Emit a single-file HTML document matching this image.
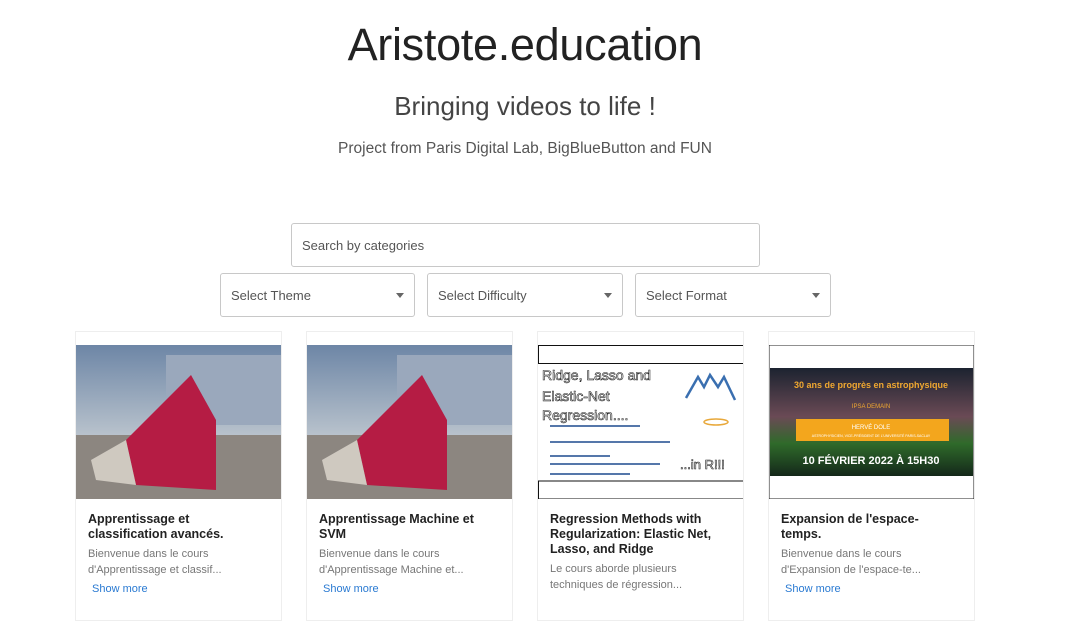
<!DOCTYPE html>
<html><head><meta charset="utf-8"><style>
body{margin:0;background:#fff;font-family:"Liberation Sans",sans-serif;width:1080px;height:608px;overflow:hidden;position:relative}
h1{position:absolute;left:0;width:1050px;text-align:center;top:19px;margin:0;font-weight:normal;font-size:45px;color:#222;letter-spacing:-0.3px}
.sub{position:absolute;left:0;width:1050px;text-align:center;top:91px;font-size:26px;color:#444}
.sub2{position:absolute;left:0;width:1050px;text-align:center;top:140px;font-size:15.5px;color:#555}
.box{position:absolute;border:1px solid #c8c8c8;border-radius:3px;box-sizing:border-box;font-size:13px;color:#555;padding-left:10px;display:flex;align-items:center}
.box .ar{position:absolute;right:10px;top:19px;width:0;height:0;border-left:4px solid transparent;border-right:4px solid transparent;border-top:5px solid #666}
.card{position:absolute;top:331px;width:207px;height:290px;border:1px solid #eee;box-sizing:border-box;background:#fff}
.img{position:absolute;left:0;top:13px;width:205px;height:154px}
.t{position:absolute;left:12px;top:180px;width:170px;font-weight:bold;font-size:12.5px;line-height:15px;color:#222}
.d{position:absolute;left:12px;width:155px;font-size:11px;line-height:16px;color:#777}
.s{position:absolute;left:16px;font-size:11px;color:#2a7ad2}
</style></head><body>
<h1>Aristote.education</h1>
<div class="sub">Bringing videos to life !</div>
<div class="sub2">Project from Paris Digital Lab, BigBlueButton and FUN</div>
<div class="box" style="left:291px;top:223px;width:469px;height:44px">Search by categories</div>
<div class="box" style="left:220px;top:273px;width:195px;height:44px">Select Theme<span class="ar"></span></div>
<div class="box" style="left:427px;top:273px;width:196px;height:44px">Select Difficulty<span class="ar"></span></div>
<div class="box" style="left:635px;top:273px;width:196px;height:44px">Select Format<span class="ar"></span></div>

<div class="card" style="left:75px">
<svg class="img" viewBox="0 0 205 154"><defs><linearGradient id="sk" x1="0" y1="0" x2="0" y2="1"><stop offset="0" stop-color="#6d86a6"/><stop offset="1" stop-color="#b8c2cc"/></linearGradient></defs><rect width="205" height="90" fill="url(#sk)"/><rect x="90" y="10" width="115" height="70" fill="#9aa8bc"/><rect x="0" y="90" width="205" height="64" fill="#8c8680"/><polygon points="50,95 115,30 140,75 140,145 60,140" fill="#b51c44"/><polygon points="50,95 60,140 20,135 15,115" fill="#cfc9c0"/></svg>
<div class="t">Apprentissage et classification avancés.</div>
<div class="d" style="top:214px">Bienvenue dans le cours d'Apprentissage et classif...</div>
<div class="s" style="top:251px">Show more</div></div>

<div class="card" style="left:306px">
<svg class="img" viewBox="0 0 205 154"><rect width="205" height="90" fill="url(#sk)"/><rect x="90" y="10" width="115" height="70" fill="#9aa8bc"/><rect x="0" y="90" width="205" height="64" fill="#8c8680"/><polygon points="50,95 115,30 140,75 140,145 60,140" fill="#b51c44"/><polygon points="50,95 60,140 20,135 15,115" fill="#cfc9c0"/></svg>
<div class="t">Apprentissage Machine et SVM</div>
<div class="d" style="top:214px">Bienvenue dans le cours d'Apprentissage Machine et...</div>
<div class="s" style="top:251px">Show more</div></div>

<div class="card" style="left:537px">
<svg class="img" viewBox="0 0 205 154"><rect width="205" height="154" fill="#fff"/><rect x="0.5" y="0.5" width="205" height="18" fill="none" stroke="#111"/><rect x="0.5" y="136" width="205" height="18" fill="none" stroke="#111"/><text x="4" y="35" font-size="14" fill="#fff" stroke="#222" stroke-width=".6" font-family="Liberation Sans">Ridge, Lasso and</text><text x="4" y="56" font-size="14" fill="#fff" stroke="#222" stroke-width=".6" font-family="Liberation Sans">Elastic-Net</text><text x="4" y="75" font-size="14" fill="#fff" stroke="#222" stroke-width=".6" font-family="Liberation Sans">Regression....</text><polyline points="148,53 160,32 166,42 172,30 180,42 186,32 197,55" fill="none" stroke="#3a6fb0" stroke-width="2.5"/><ellipse cx="178" cy="77" rx="12" ry="3" fill="none" stroke="#e8a83a" stroke-width="1.5"/><g fill="#5577aa"><rect x="12" y="80" width="90" height="2"/><rect x="12" y="96" width="120" height="2"/><rect x="12" y="110" width="60" height="2"/><rect x="12" y="118" width="110" height="2"/><rect x="12" y="128" width="80" height="2"/></g><text x="142" y="124" font-size="13" fill="#fff" stroke="#222" stroke-width=".6">...in R!!!</text></svg>
<div class="t">Regression Methods with Regularization: Elastic Net, Lasso, and Ridge</div>
<div class="d" style="top:229px">Le cours aborde plusieurs techniques de régression...</div></div>

<div class="card" style="left:768px">
<svg class="img" viewBox="0 0 205 154"><rect width="205" height="154" fill="#fff" stroke="#222"/><defs><linearGradient id="g2" x1="0" y1="0" x2="0" y2="1"><stop offset="0" stop-color="#1c2330"/><stop offset=".45" stop-color="#6a4a55"/><stop offset=".7" stop-color="#2f6a2a"/><stop offset="1" stop-color="#14281a"/></linearGradient></defs><rect x="1" y="23" width="203" height="108" fill="url(#g2)"/><text x="102" y="43" text-anchor="middle" font-size="9" fill="#f0a830" font-weight="bold">30 ans de progrès en astrophysique</text><text x="102" y="63" text-anchor="middle" font-size="6" fill="#f0a830">IPSA DEMAIN</text><rect x="27" y="74" width="153" height="22" fill="#f3a61d"/><text x="102" y="84" text-anchor="middle" font-size="6" fill="#fff">HERVÉ DOLE</text><text x="102" y="92" text-anchor="middle" font-size="3.5" fill="#fff">ASTROPHYSICIEN, VICE-PRÉSIDENT DE L'UNIVERSITÉ PARIS-SACLAY</text><text x="102" y="119" text-anchor="middle" font-size="11" fill="#fff" font-weight="bold">10 FÉVRIER 2022 À 15H30</text></svg>
<div class="t" style="width:150px">Expansion de l'espace-temps.</div>
<div class="d" style="top:214px">Bienvenue dans le cours d'Expansion de l'espace-te...</div>
<div class="s" style="top:251px">Show more</div></div>
</body></html>
